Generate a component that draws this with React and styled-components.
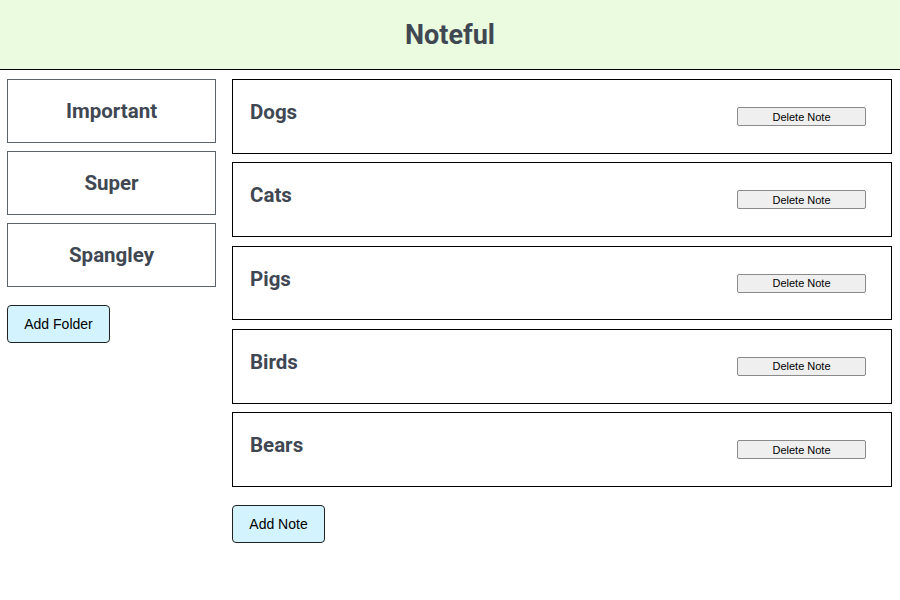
import styled, { createGlobalStyle } from 'styled-components';

const GlobalStyle = createGlobalStyle`
  body {
    margin: 0;
    font-family: Roboto, "Liberation Sans", sans-serif;
    background: #fff;
  }
`;

const Header = styled.header`
  height: 69px;
  background: #ebfbe0;
  border-bottom: 1px solid #000;
  display: flex;
  align-items: center;
  justify-content: center;
`;

const Title = styled.h1`
  margin: 0;
  font-size: 27px;
  font-weight: 700;
  color: #3f4852;
`;

const Layout = styled.div`
  display: flex;
  gap: 16px;
  padding: 9px 8px 0 7px;
`;

const Sidebar = styled.nav`
  width: 209px;
  flex-shrink: 0;
  display: flex;
  flex-direction: column;
  gap: 8px;
`;

const Folder = styled.div`
  box-sizing: border-box;
  height: 64px;
  border: 1px solid #5b626b;
  display: flex;
  align-items: center;
  justify-content: center;
  font-size: 20.5px;
  font-weight: 700;
  color: #3f4852;
`;

const Main = styled.main`
  flex: 1;
  display: flex;
  flex-direction: column;
  gap: 8.5px;
`;

const Note = styled.div`
  box-sizing: border-box;
  height: 74.8px;
  border: 1px solid #000;
  display: flex;
  justify-content: space-between;
  align-items: flex-start;
  padding: 0 25px 0 17px;
`;

const NoteTitle = styled.h2`
  margin: 20px 0 0;
  font-size: 20.5px;
  line-height: 24px;
  font-weight: 700;
  color: #3f4852;
`;

const DeleteButton = styled.button`
  margin-top: 27px;
  width: 129px;
  height: 19px;
  padding: 0;
  font-family: "Liberation Sans", Arial, sans-serif;
  font-size: 11px;
  color: #000;
  background: #efefef;
  border: 1px solid #8a8a8a;
  border-radius: 2px;
`;

const AddButton = styled.button`
  align-self: flex-start;
  margin-top: ${(p) => p.$top}px;
  width: ${(p) => p.$w}px;
  height: 38px;
  padding: 0;
  font-family: "Liberation Sans", Arial, sans-serif;
  font-size: 14px;
  color: #000;
  background: #d3f4ff;
  border: 1px solid #222;
  border-radius: 4px;
`;

const folders = ['Important', 'Super', 'Spangley'];
const notes = ['Dogs', 'Cats', 'Pigs', 'Birds', 'Bears'];

export default function App() {
  return (
    <>
      <GlobalStyle />
      <Header>
        <Title>Noteful</Title>
      </Header>
      <Layout>
        <Sidebar>
          {folders.map((f) => (
            <Folder key={f}>{f}</Folder>
          ))}
          <AddButton $top={10} $w={103}>Add Folder</AddButton>
        </Sidebar>
        <Main>
          {notes.map((n) => (
            <Note key={n}>
              <NoteTitle>{n}</NoteTitle>
              <DeleteButton>Delete Note</DeleteButton>
            </Note>
          ))}
          <AddButton $top={9.5} $w={93}>Add Note</AddButton>
        </Main>
      </Layout>
    </>
  );
}
